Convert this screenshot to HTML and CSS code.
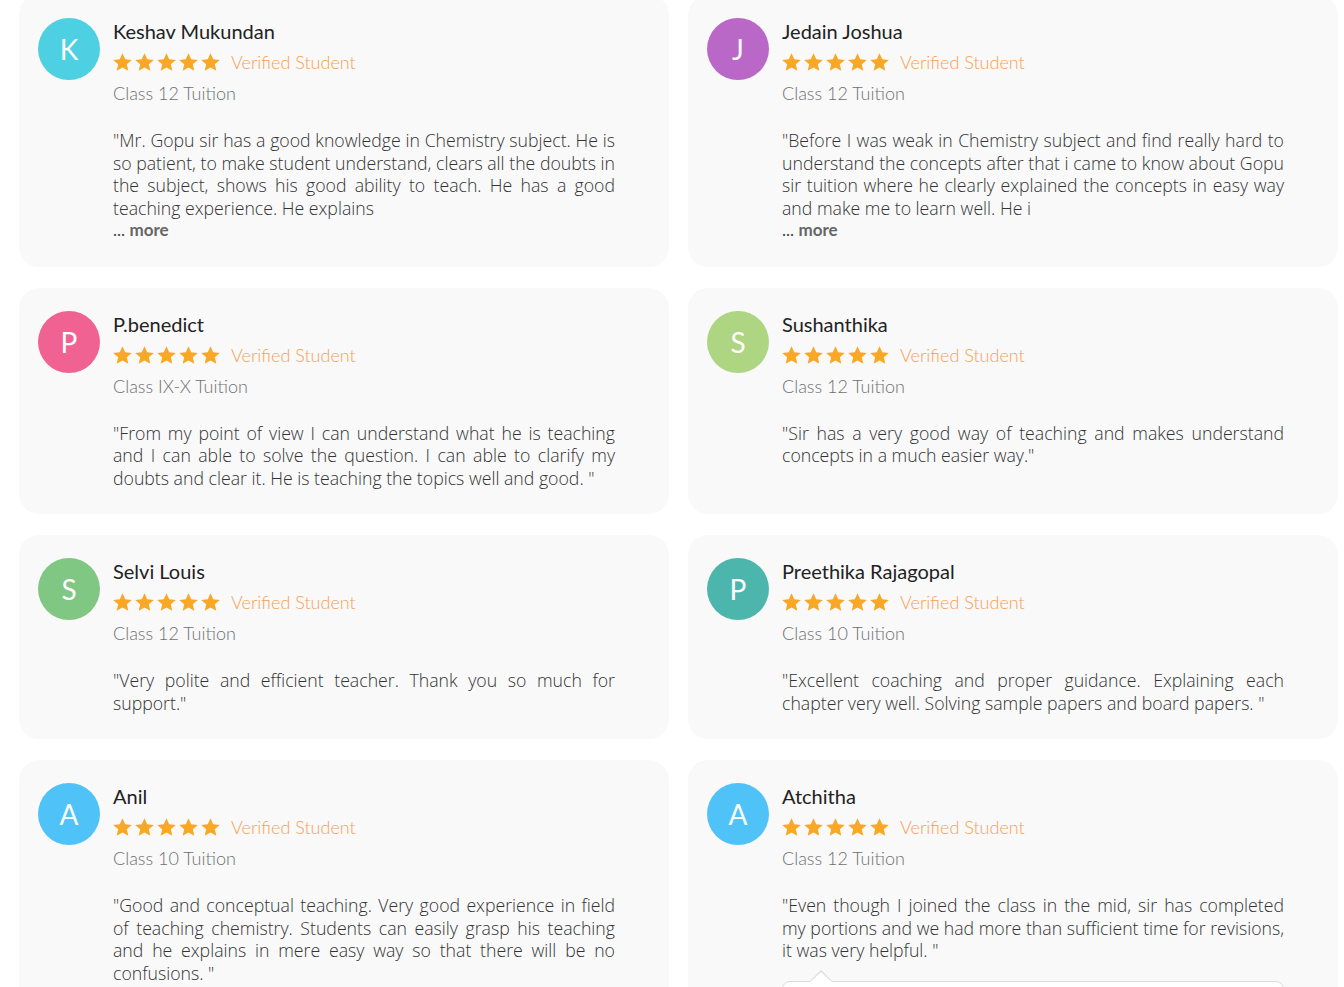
FILE: index.html
```html
<!DOCTYPE html>
<html lang="en">
<head>
<meta charset="utf-8">
<title>Reviews</title>
<link rel="stylesheet" href="styles.css">
</head>
<body>
<svg width="0" height="0" class="defs" aria-hidden="true">
  <defs>
    <symbol id="star" viewBox="1.2 1.4 21.6 20.4">
      <path d="M12 1.6l3.1 6.9 7.5.7-5.7 5 1.7 7.4L12 17.8l-6.6 3.8 1.7-7.4-5.7-5 7.5-.7z"/>
    </symbol>
  </defs>
</svg>
<main class="reviews">

  <article class="card">
    <div class="avatar av-cyan">K</div>
    <div class="body">
      <h3 class="name">Keshav Mukundan</h3>
      <div class="meta">
        <span class="stars"><svg><use href="#star"/></svg><svg><use href="#star"/></svg><svg><use href="#star"/></svg><svg><use href="#star"/></svg><svg><use href="#star"/></svg></span>
        <span class="verified">Verified Student</span>
      </div>
      <div class="course">Class 12 Tuition</div>
      <p class="text">"Mr. Gopu sir has a good knowledge in Chemistry subject. He is so patient, to make student understand, clears all the doubts in the subject, shows his good ability to teach. He has a good teaching experience. He explains</p>
      <div class="more">... <b>more</b></div>
    </div>
  </article>

  <article class="card">
    <div class="avatar av-purple">J</div>
    <div class="body">
      <h3 class="name">Jedain Joshua</h3>
      <div class="meta">
        <span class="stars"><svg><use href="#star"/></svg><svg><use href="#star"/></svg><svg><use href="#star"/></svg><svg><use href="#star"/></svg><svg><use href="#star"/></svg></span>
        <span class="verified">Verified Student</span>
      </div>
      <div class="course">Class 12 Tuition</div>
      <p class="text">"Before I was weak in Chemistry subject and find really hard to understand the concepts after that i came to know about Gopu sir tuition where he clearly explained the concepts in easy way and make me to learn well. He i</p>
      <div class="more">... <b>more</b></div>
    </div>
  </article>

  <article class="card">
    <div class="avatar av-pink">P</div>
    <div class="body">
      <h3 class="name">P.benedict</h3>
      <div class="meta">
        <span class="stars"><svg><use href="#star"/></svg><svg><use href="#star"/></svg><svg><use href="#star"/></svg><svg><use href="#star"/></svg><svg><use href="#star"/></svg></span>
        <span class="verified">Verified Student</span>
      </div>
      <div class="course">Class IX-X Tuition</div>
      <p class="text">"From my point of view I can understand what he is teaching and I can able to solve the question. I can able to clarify my doubts and clear it. He is teaching the topics well and good. "</p>
    </div>
  </article>

  <article class="card">
    <div class="avatar av-lime">S</div>
    <div class="body">
      <h3 class="name">Sushanthika</h3>
      <div class="meta">
        <span class="stars"><svg><use href="#star"/></svg><svg><use href="#star"/></svg><svg><use href="#star"/></svg><svg><use href="#star"/></svg><svg><use href="#star"/></svg></span>
        <span class="verified">Verified Student</span>
      </div>
      <div class="course">Class 12 Tuition</div>
      <p class="text">"Sir has a very good way of teaching and makes understand concepts in a much easier way."</p>
    </div>
  </article>

  <article class="card">
    <div class="avatar av-green">S</div>
    <div class="body">
      <h3 class="name">Selvi Louis</h3>
      <div class="meta">
        <span class="stars"><svg><use href="#star"/></svg><svg><use href="#star"/></svg><svg><use href="#star"/></svg><svg><use href="#star"/></svg><svg><use href="#star"/></svg></span>
        <span class="verified">Verified Student</span>
      </div>
      <div class="course">Class 12 Tuition</div>
      <p class="text">"Very polite and efficient teacher. Thank you so much for support."</p>
    </div>
  </article>

  <article class="card">
    <div class="avatar av-teal">P</div>
    <div class="body">
      <h3 class="name">Preethika Rajagopal</h3>
      <div class="meta">
        <span class="stars"><svg><use href="#star"/></svg><svg><use href="#star"/></svg><svg><use href="#star"/></svg><svg><use href="#star"/></svg><svg><use href="#star"/></svg></span>
        <span class="verified">Verified Student</span>
      </div>
      <div class="course">Class 10 Tuition</div>
      <p class="text">"Excellent coaching and proper guidance. Explaining each chapter very well. Solving sample papers and board papers. "</p>
    </div>
  </article>

  <article class="card">
    <div class="avatar av-blue">A</div>
    <div class="body">
      <h3 class="name">Anil</h3>
      <div class="meta">
        <span class="stars"><svg><use href="#star"/></svg><svg><use href="#star"/></svg><svg><use href="#star"/></svg><svg><use href="#star"/></svg><svg><use href="#star"/></svg></span>
        <span class="verified">Verified Student</span>
      </div>
      <div class="course">Class 10 Tuition</div>
      <p class="text">"Good and conceptual teaching. Very good experience in field of teaching chemistry. Students can easily grasp his teaching and he explains in mere easy way so that there will be no confusions. "</p>
    </div>
  </article>

  <article class="card">
    <div class="avatar av-blue">A</div>
    <div class="body">
      <h3 class="name">Atchitha</h3>
      <div class="meta">
        <span class="stars"><svg><use href="#star"/></svg><svg><use href="#star"/></svg><svg><use href="#star"/></svg><svg><use href="#star"/></svg><svg><use href="#star"/></svg></span>
        <span class="verified">Verified Student</span>
      </div>
      <div class="course">Class 12 Tuition</div>
      <p class="text">"Even though I joined the class in the mid, sir has completed my portions and we had more than sufficient time for revisions, it was very helpful. "</p>
      <div class="reply"></div>
    </div>
  </article>

</main>
</body>
</html>
```
FILE: styles.css
```css
* { box-sizing: border-box; }

html, body {
  margin: 0;
  padding: 0;
  background: #ffffff;
  overflow: hidden;
}

.defs { position: absolute; width: 0; height: 0; }

.reviews {
  display: grid;
  grid-template-columns: 650px 650px;
  column-gap: 19px;
  row-gap: 21px;
  margin-top: -5px;
  padding-left: 19px;
}

.card {
  display: flex;
  align-items: flex-start;
  background: #f9f9f9;
  border-radius: 20px;
  padding: 23px 54px 25px 19px;
}

.avatar {
  flex: 0 0 62px;
  width: 62px;
  height: 62px;
  border-radius: 50%;
  margin-right: 13px;
  color: #fff;
  font-family: "Lato", "Liberation Sans", sans-serif;
  font-size: 28px;
  line-height: 62px;
  text-align: center;
}

.av-cyan { background: #4dd0e1; }
.av-purple { background: #ba68c8; }
.av-pink { background: #f06292; }
.av-lime { background: #aed581; }
.av-green { background: #81c784; }
.av-teal { background: #4db6ac; }
.av-blue { background: #4fc3f7; }

.body {
  flex: 1 1 auto;
  min-width: 0;
}

.name {
  margin: 0;
  font-family: "Lato", "Liberation Sans", sans-serif;
  font-weight: 400;
  font-size: 20px;
  line-height: 26px;
  color: #222;
}

.meta {
  display: flex;
  align-items: center;
  height: 24px;
  margin-top: 6px;
}

.stars {
  display: flex;
  gap: 3px;
}

.stars svg {
  width: 19px;
  height: 18px;
  fill: #f8a825;
}

.verified {
  margin-left: 11px;
  font-family: "Lato", "Liberation Sans", sans-serif;
  font-size: 18px;
  font-weight: 300;
  color: #f7a054;
}

.course {
  margin-top: 7px;
  font-family: "Lato", "Liberation Sans", sans-serif;
  font-size: 18px;
  font-weight: 300;
  line-height: 24px;
  color: #707070;
}

.text {
  margin: 24px 0 0;
  font-family: "Open Sans", "Noto Sans", sans-serif;
  font-weight: 300;
  font-size: 17.7px;
  line-height: 22.5px;
  color: #333;
  text-align: justify;
}

.more {
  font-family: "Lato", "Liberation Sans", sans-serif;
  font-size: 17px;
  line-height: 22.5px;
  color: #444;
}

.more b {
  font-weight: 700;
  color: #666;
}

.reply {
  position: relative;
  margin-top: 19px;
  height: 40px;
  background: #fff;
  border: 1px solid #dcdcdc;
  border-radius: 8px;
}

.reply::before,
.reply::after {
  content: "";
  position: absolute;
  left: 27px;
  width: 0;
  height: 0;
  border-left: 11px solid transparent;
  border-right: 11px solid transparent;
}

.reply::before {
  top: -12px;
  border-bottom: 11px solid #dcdcdc;
}

.reply::after {
  top: -10px;
  border-bottom: 10px solid #fff;
}
```
